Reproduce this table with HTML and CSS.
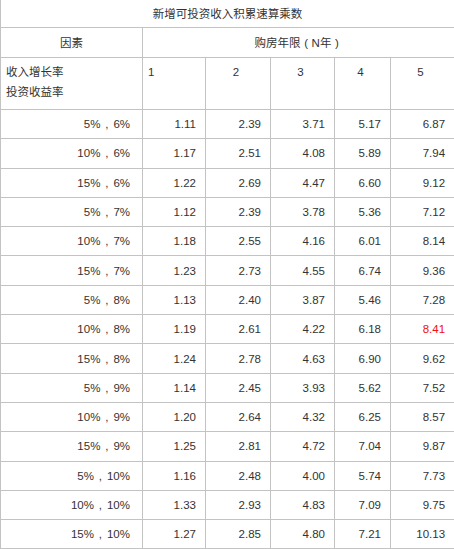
FILE: index.html
```html
<!DOCTYPE html>
<html lang="zh-CN">
<head>
<meta charset="utf-8">
<title>新增可投资收入积累速算乘数</title>
<link rel="stylesheet" href="styles.css">
</head>
<body>
<table class="grid">
  <colgroup>
    <col class="c0"><col class="c1"><col class="c2"><col class="c3"><col class="c4"><col class="c5">
  </colgroup>
  <tr class="r-title"><td colspan="6" class="title">新增可投资收入积累速算乘数</td></tr>
  <tr class="r-head"><td class="center">因素</td><td colspan="5" class="center">购房年限<span class="pr">(</span>N年<span class="pr">)</span></td></tr>
  <tr class="r-sub">
    <td class="sub-left">收入增长率<br>投资收益率</td>
    <td class="sub-left">1</td>
    <td class="sub-center">2</td>
    <td class="sub-center">3</td>
    <td class="sub-center">4</td>
    <td class="sub-center">5</td>
  </tr>
  <tr class="r-data"><td class="k">5%<span class="cm">,</span>6%</td><td>1.11</td><td>2.39</td><td>3.71</td><td>5.17</td><td>6.87</td></tr>
  <tr class="r-data"><td class="k">10%<span class="cm">,</span>6%</td><td>1.17</td><td>2.51</td><td>4.08</td><td>5.89</td><td>7.94</td></tr>
  <tr class="r-data"><td class="k">15%<span class="cm">,</span>6%</td><td>1.22</td><td>2.69</td><td>4.47</td><td>6.60</td><td>9.12</td></tr>
  <tr class="r-data"><td class="k">5%<span class="cm">,</span>7%</td><td>1.12</td><td>2.39</td><td>3.78</td><td>5.36</td><td>7.12</td></tr>
  <tr class="r-data"><td class="k">10%<span class="cm">,</span>7%</td><td>1.18</td><td>2.55</td><td>4.16</td><td>6.01</td><td>8.14</td></tr>
  <tr class="r-data"><td class="k">15%<span class="cm">,</span>7%</td><td>1.23</td><td>2.73</td><td>4.55</td><td>6.74</td><td>9.36</td></tr>
  <tr class="r-data"><td class="k">5%<span class="cm">,</span>8%</td><td>1.13</td><td>2.40</td><td>3.87</td><td>5.46</td><td>7.28</td></tr>
  <tr class="r-data"><td class="k">10%<span class="cm">,</span>8%</td><td>1.19</td><td>2.61</td><td>4.22</td><td>6.18</td><td class="hl">8.41</td></tr>
  <tr class="r-data"><td class="k">15%<span class="cm">,</span>8%</td><td>1.24</td><td>2.78</td><td>4.63</td><td>6.90</td><td>9.62</td></tr>
  <tr class="r-data"><td class="k">5%<span class="cm">,</span>9%</td><td>1.14</td><td>2.45</td><td>3.93</td><td>5.62</td><td>7.52</td></tr>
  <tr class="r-data"><td class="k">10%<span class="cm">,</span>9%</td><td>1.20</td><td>2.64</td><td>4.32</td><td>6.25</td><td>8.57</td></tr>
  <tr class="r-data"><td class="k">15%<span class="cm">,</span>9%</td><td>1.25</td><td>2.81</td><td>4.72</td><td>7.04</td><td>9.87</td></tr>
  <tr class="r-data"><td class="k">5%<span class="cm">,</span>10%</td><td>1.16</td><td>2.48</td><td>4.00</td><td>5.74</td><td>7.73</td></tr>
  <tr class="r-data"><td class="k">10%<span class="cm">,</span>10%</td><td>1.33</td><td>2.93</td><td>4.83</td><td>7.09</td><td>9.75</td></tr>
  <tr class="r-data"><td class="k">15%<span class="cm">,</span>10%</td><td>1.27</td><td>2.85</td><td>4.80</td><td>7.21</td><td>10.13</td></tr>
</table>
</body>
</html>
```

FILE: styles.css
```css
html, body {
  margin: 0;
  padding: 0;
  background: #ffffff;
}

.grid {
  width: 454px;
  border-collapse: collapse;
  table-layout: fixed;
  font-family: "Liberation Sans", "Noto Sans CJK SC", sans-serif;
  font-size: 11.5px;
  color: #333333;
}

.c0 { width: 142px; }
.c1 { width: 63px; }
.c2 { width: 65px; }
.c3 { width: 64px; }
.c4 { width: 56px; }
.c5 { width: 64px; }

.grid td {
  border: 1px solid #c3c3c3;
  padding: 0 9px 0 4px;
  text-align: right;
  vertical-align: middle;
  line-height: 20px;
  white-space: nowrap;
  overflow: hidden;
}

.r-title td {
  border-top: none;
  height: 27px;
}

.title {
  text-align: center !important;
  padding: 0 !important;
}

.r-head td {
  height: 29px;
}

.center {
  text-align: center !important;
  padding: 0 !important;
}

.r-sub td {
  height: 47px;
  vertical-align: top;
  padding-top: 4px;
}

.grid .sub-left {
  text-align: left;
  padding-left: 5px;
}

.grid .sub-center {
  text-align: center;
  padding: 4px 4px 0 0;
}

.r-data td {
  height: 28.3px;
}

.grid .k {
  padding-right: 12px;
}

.cm {
  display: inline-block;
  width: 13px;
  text-align: center;
}

.pr {
  display: inline-block;
  width: 11px;
  text-align: center;
}

.hl {
  color: #ee1111;
}
```
